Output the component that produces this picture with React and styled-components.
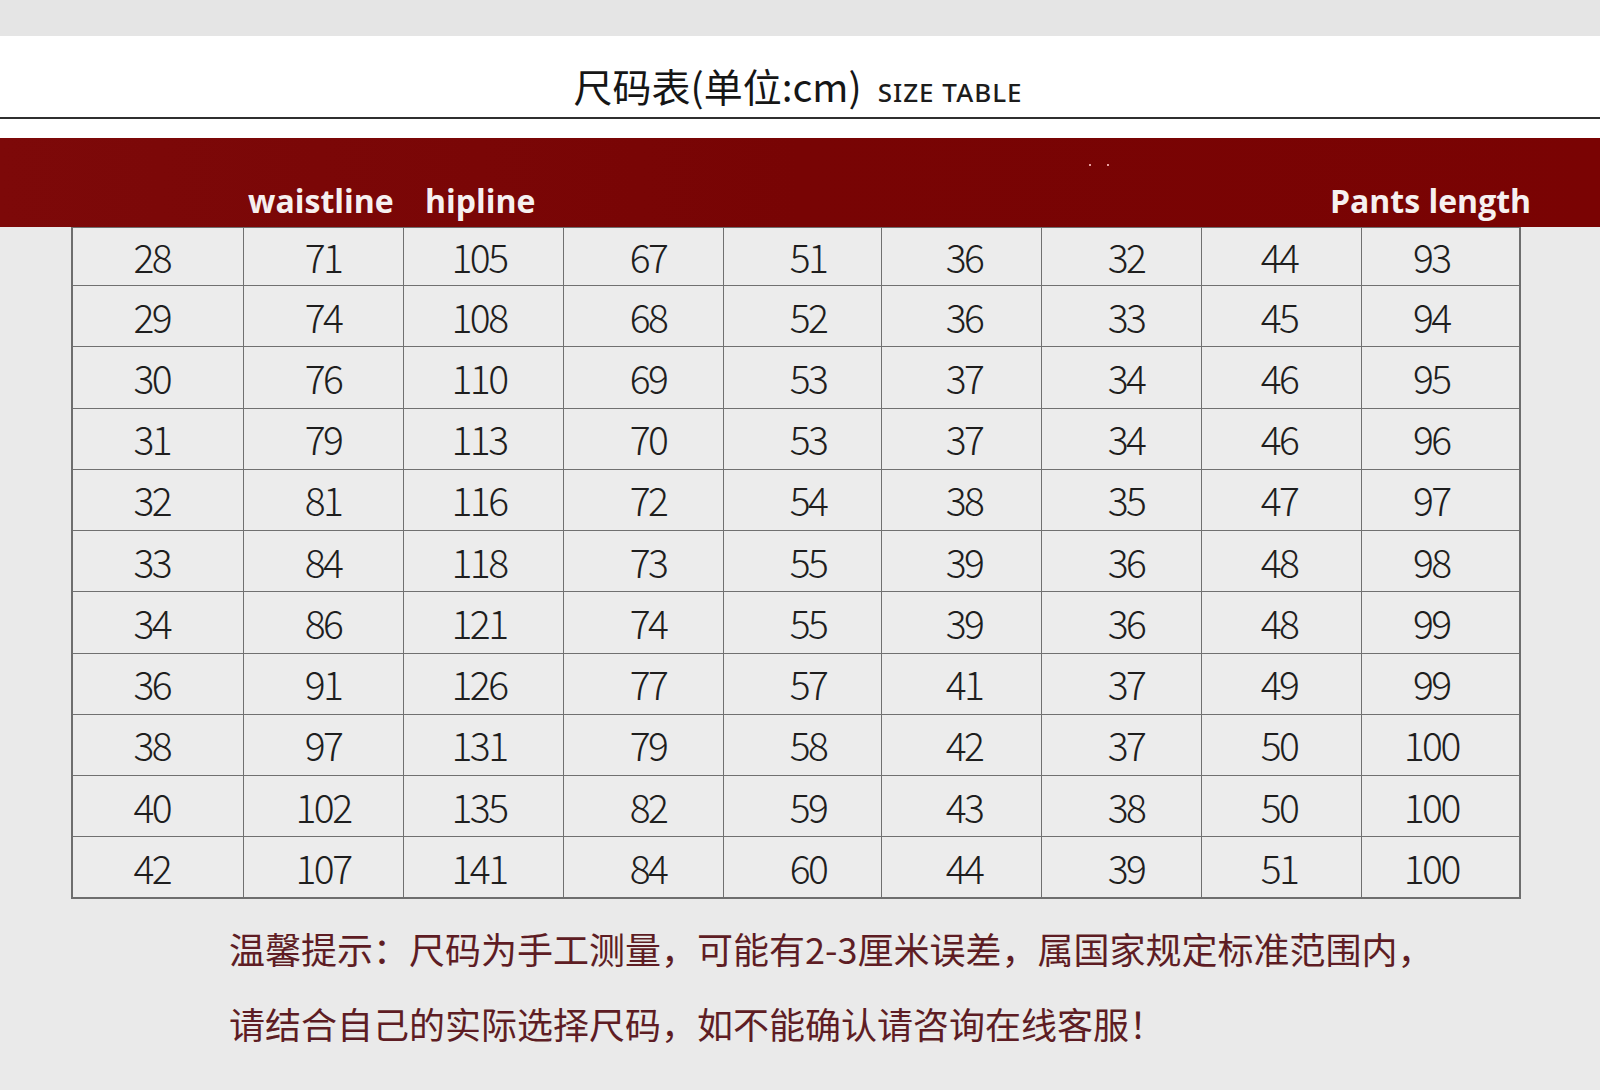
import React from 'react'
import styled, { createGlobalStyle } from 'styled-components'

const rows = [
  [28, 71, 105, 67, 51, 36, 32, 44, 93],
  [29, 74, 108, 68, 52, 36, 33, 45, 94],
  [30, 76, 110, 69, 53, 37, 34, 46, 95],
  [31, 79, 113, 70, 53, 37, 34, 46, 96],
  [32, 81, 116, 72, 54, 38, 35, 47, 97],
  [33, 84, 118, 73, 55, 39, 36, 48, 98],
  [34, 86, 121, 74, 55, 39, 36, 48, 99],
  [36, 91, 126, 77, 57, 41, 37, 49, 99],
  [38, 97, 131, 79, 58, 42, 37, 50, 100],
  [40, 102, 135, 82, 59, 43, 38, 50, 100],
  [42, 107, 141, 84, 60, 44, 39, 51, 100],
]

const colWidths = [171, 160, 160, 160, 158, 160, 160, 160, 159]

// the numbers in the original are not quite centred, nudge each column a bit
const nudges = [-6, 0, -4, 5, 6, 3, 5, -2, -9]

// header labels sit in the same columns as the table below
const headers = [
  null,
  { text: 'waistline', align: 'flex-start', pad: 6 },
  { text: 'hipline', align: 'flex-start', pad: 23 },
  null,
  null,
  null,
  null,
  null,
  { text: 'Pants length', align: 'center', pad: 0, shift: -9 },
]

const App = () => {
  return (
    <>
      <GlobalStyle />
      <Page>
        <TopStrip />
        <TitleBar>
          <Title>
            尺码表(单位:cm)<Sub>SIZE TABLE</Sub>
          </Title>
        </TitleBar>
        <Rule />
        <Gap />
        <HeaderBand>
          <HeaderGrid>
            {headers.map((h, i) => (
              <HeaderCell key={i} $align={h ? h.align : 'center'} $pad={h ? h.pad : 0}>
                {h && <Label $shift={h.shift || 0}>{h.text}</Label>}
              </HeaderCell>
            ))}
          </HeaderGrid>
          <Specks>
            <i />
            <i />
          </Specks>
        </HeaderBand>
        <Table>
          <colgroup>
            {colWidths.map((w, i) => (
              <col key={i} style={{ width: w }} />
            ))}
          </colgroup>
          <tbody>
            {rows.map((row, r) => (
              <Tr key={r} $first={r === 0}>
                {row.map((v, c) => (
                  <Td key={c} $nudge={nudges[c]}>
                    {v}
                  </Td>
                ))}
              </Tr>
            ))}
          </tbody>
        </Table>
        <Note>
          <p>温馨提示：尺码为手工测量，可能有2-3厘米误差，属国家规定标准范围内，</p>
          <p>请结合自己的实际选择尺码，如不能确认请咨询在线客服！</p>
        </Note>
      </Page>
    </>
  )
}

const GlobalStyle = createGlobalStyle`
  html, body {
    margin: 0;
    padding: 0;
    background: #eaeaea;
  }
  body {
    font-family: "Noto Sans CJK SC", "Noto Sans", sans-serif;
  }
`

const Page = styled.div`
  width: 1600px;
  height: 1090px;
  overflow: hidden;
  background: #eaeaea;
  display: flex;
  flex-direction: column;
`

const TopStrip = styled.div`
  height: 36px;
  background: #e5e5e5;
`

const TitleBar = styled.div`
  height: 81px;
  background: #ffffff;
  display: flex;
  justify-content: center;
  align-items: flex-end;
`

const Title = styled.h1`
  margin: 0 0 0 -4px;
  font-family: "Noto Sans CJK SC", sans-serif;
  font-weight: 400;
  font-size: 39px;
  line-height: 50px;
  color: #161616;
  display: flex;
  align-items: baseline;
`

const Sub = styled.span`
  margin-left: 16px;
  font-family: "Noto Sans", "Open Sans", sans-serif;
  font-size: 26px;
  font-weight: 500;
  letter-spacing: 1px;
  color: #1c1c1c;
`

const Rule = styled.div`
  height: 2px;
  background: #2f2f2f;
`

const Gap = styled.div`
  height: 19px;
  background: #ffffff;
`

const HeaderBand = styled.div`
  position: relative;
  height: 89px;
  background: linear-gradient(90deg, #7d0909 0%, #780404 50%, #7a0303 100%);
  padding-left: 71px;
  box-sizing: border-box;
`

const HeaderGrid = styled.div`
  display: grid;
  grid-template-columns: ${colWidths.map((w) => w + 'px').join(' ')};
  height: 100%;
`

const HeaderCell = styled.div`
  display: flex;
  justify-content: ${(p) => p.$align};
  align-items: flex-end;
  padding-left: ${(p) => p.$pad}px;
  padding-bottom: 4px;
  white-space: nowrap;
`

const Label = styled.span`
  position: relative;
  left: ${(p) => p.$shift}px;
  font-family: "Open Sans", "Noto Sans", sans-serif;
  font-weight: 700;
  font-size: 32px;
  line-height: 44px;
  color: #f6f0f0;
`

const Specks = styled.div`
  position: absolute;
  left: 1089px;
  top: 26px;
  display: flex;
  gap: 16px;
  i {
    width: 2px;
    height: 2px;
    background: #e8a0a0;
  }
`

const Table = styled.table`
  margin-left: 71px;
  width: 1448px;
  border-collapse: collapse;
  table-layout: fixed;
  background: #ececec;
  border: 2px solid #6e6e6e;
  border-top: none;
`

const Tr = styled.tr`
  height: ${(p) => (p.$first ? 58 : 61.25)}px;
`

// text-indent on centred text moves it by half the indent
const Td = styled.td`
  padding: 0;
  border: 1.5px solid #707070;
  text-align: center;
  text-indent: ${(p) => p.$nudge * 2}px;
  font-family: "Noto Sans CJK SC", "Noto Sans", sans-serif;
  font-weight: 300;
  font-size: 39px;
  line-height: 1;
  letter-spacing: -2.5px;
  color: #1e1e1e;
`

const Note = styled.div`
  margin: 12px 0 0 229px;
  p {
    margin: 0;
    font-family: "Noto Sans CJK SC", sans-serif;
    font-size: 36px;
    line-height: 75px;
    font-weight: 400;
    color: #5e1d24;
    white-space: nowrap;
  }
`

export default App
